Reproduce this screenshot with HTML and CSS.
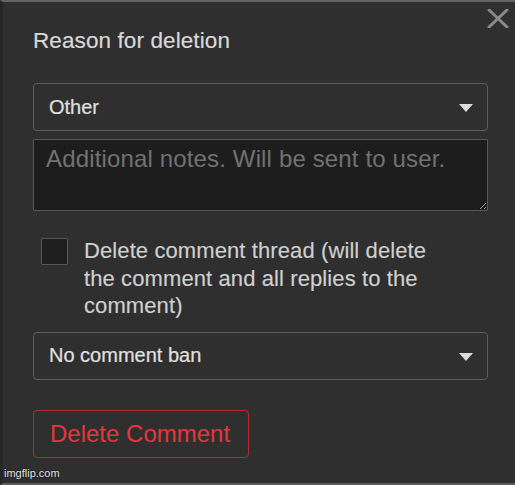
FILE: index.html
```html
<!DOCTYPE html>
<html lang="en">
<head>
<meta charset="utf-8">
<title>Reason for deletion</title>
<link rel="stylesheet" href="styles.css">
</head>
<body>
<div class="panel">
  <button class="close" aria-label="Close">
    <svg width="22" height="19" viewBox="0 0 22 19"><path d="M2 1 L20 18 M20 1 L2 18" stroke="#8a8a8a" stroke-width="3" stroke-linecap="round"/></svg>
  </button>
  <h2 class="title">Reason for deletion</h2>
  <div class="select select-reason">
    <span class="select-text">Other</span>
    <span class="caret"></span>
  </div>
  <textarea class="notes" placeholder="Additional notes. Will be sent to user."></textarea>
  <label class="check-row">
    <input type="checkbox" class="check">
    <span class="check-label">Delete comment thread (will delete the comment and all replies to the comment)</span>
  </label>
  <div class="select select-ban">
    <span class="select-text">No comment ban</span>
    <span class="caret"></span>
  </div>
  <button class="delete-btn">Delete Comment</button>
  <div class="watermark">imgflip.com</div>
</div>
</body>
</html>
```
FILE: styles.css
```css
html, body {
  margin: 0;
  padding: 0;
  background: #2f2f2f;
}
body {
  font-family: "Liberation Sans", Arial, sans-serif;
  width: 515px;
  height: 485px;
  overflow: hidden;
}
.panel {
  position: relative;
  box-sizing: border-box;
  width: 515px;
  height: 485px;
  background: #2f2f2f;
  border-top: 2px solid #646464;
  border-bottom: 2px solid #5c5c5c;
  border-left: 3px solid #272727;
  padding: 26px 27px 0 30px;
  display: flex;
  flex-direction: column;
  align-items: stretch;
}
.close {
  position: absolute;
  top: 7px;
  right: 6px;
  padding: 0;
  margin: 0;
  border: 0;
  background: none;
  line-height: 0;
}
.title {
  margin: 0;
  font-size: 22.5px;
  line-height: 26px;
  font-weight: normal;
  color: #d8d8d8;
  letter-spacing: 0.1px;
  -webkit-text-stroke: 0.2px #d8d8d8;
}
.select {
  box-sizing: border-box;
  height: 48px;
  border: 1.5px solid #5e5e5e;
  border-radius: 4px;
  display: flex;
  align-items: center;
  justify-content: space-between;
  padding: 0 14px 0 15px;
  color: #e0e0e0;
  font-size: 20px;
  line-height: 23px;
  -webkit-text-stroke: 0.2px #e0e0e0;
}
.select-reason {
  margin-top: 29px;
}
.caret {
  width: 0;
  height: 0;
  border-left: 7px solid transparent;
  border-right: 7px solid transparent;
  border-top: 8px solid #dcdcdc;
  margin-top: 2px;
}
.notes {
  box-sizing: border-box;
  display: block;
  margin: 8px 0 0 0;
  height: 72px;
  width: 100%;
  background: #1d1d1d;
  border: 1.5px solid #585858;
  border-radius: 1px;
  padding: 5px 12px;
  font-family: "Liberation Sans", Arial, sans-serif;
  font-size: 24px;
  line-height: 28px;
  letter-spacing: 0.15px;
  color: #dedede;
  color-scheme: dark;
  resize: vertical;
  outline: none;
}
.notes::placeholder {
  color: #727272;
}
.check-row {
  margin-top: 26px;
  display: flex;
  align-items: flex-start;
  padding-left: 8px;
  gap: 16px;
}
.check {
  appearance: none;
  -webkit-appearance: none;
  box-sizing: border-box;
  flex: none;
  width: 27px;
  height: 27px;
  margin: 1px 0 0 0;
  background: #1e1e1e;
  border: 1.5px solid #575757;
  border-radius: 1px;
}
.check-label {
  font-size: 22px;
  line-height: 27.5px;
  letter-spacing: 0.1px;
  color: #d0d0d0;
  max-width: 350px;
  -webkit-text-stroke: 0.15px #d0d0d0;
}
.select-ban {
  margin-top: 12px;
}
.delete-btn {
  align-self: flex-start;
  box-sizing: border-box;
  margin-top: 30px;
  width: 216px;
  height: 48px;
  padding: 0 0 0 16px;
  text-align: left;
  background: #2f2f2f;
  border: 1.5px solid #b3292f;
  border-radius: 4px;
  color: #e2383d;
  font-family: "Liberation Sans", Arial, sans-serif;
  font-size: 24px;
  line-height: 28px;
}
.watermark {
  position: absolute;
  left: 1px;
  bottom: 3px;
  font-size: 11px;
  line-height: 13px;
  color: #e4e4e4;
  text-shadow: 0 0 2px #000;
}
```
